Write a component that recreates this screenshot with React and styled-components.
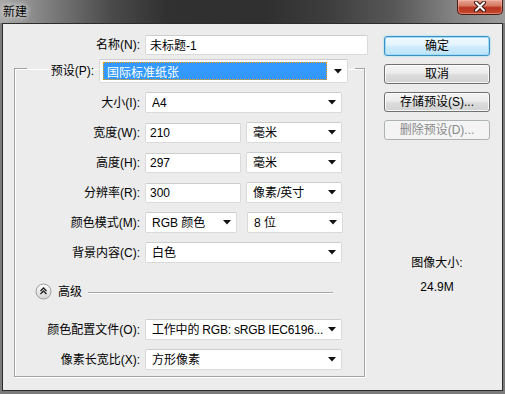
import styled, { createGlobalStyle } from "styled-components";

const GlobalStyle = createGlobalStyle`
  html, body {
    margin: 0;
    padding: 0;
    background: #7b7b7b;
  }
  body {
    font-family: "Liberation Sans", "Noto Sans CJK SC", sans-serif;
    font-size: 12px;
    color: #000;
  }
`;

const Window = styled.div`
  width: 505px;
  height: 394px;
  display: flex;
  flex-direction: column;
  background: #7b7b7b;
  overflow: hidden;
`;

const TitleBar = styled.div`
  height: 23px;
  flex: none;
  display: flex;
  justify-content: space-between;
  align-items: flex-start;
  background: linear-gradient(
    to right,
    #a9a9a9 0%,
    #808080 9%,
    #4a4a4a 22%,
    #313131 33%,
    #2f2f2f 52%,
    #3c3c3c 64%,
    #575757 78%,
    #848484 90%,
    #9b9b9b 100%
  );
`;

const Title = styled.div`
  padding: 3px 0 0 3px;
  line-height: 16px;
  font-family: "Noto Sans CJK SC", sans-serif;
  font-size: 12px;
  color: #000;
  text-shadow: 0 0 5px rgba(255, 255, 255, 0.9), 0 0 9px rgba(255, 255, 255, 0.6);
`;

const CloseButton = styled.div`
  width: 46px;
  height: 15px;
  margin-right: 2px;
  box-sizing: border-box;
  display: flex;
  justify-content: center;
  align-items: flex-start;
  padding-top: 1px;
  border: 1px solid #4e1a12;
  border-top: none;
  border-radius: 0 0 5px 5px;
  background: linear-gradient(#e7a493 0%, #d77a64 40%, #b8341f 55%, #c4492f 100%);
  box-shadow: inset 0 0 0 1px rgba(255, 200, 190, 0.45);
`;

const Frame = styled.div`
  flex: 1;
  display: flex;
  padding: 0 2px 3px 2px;
`;

const Client = styled.div`
  flex: 1;
  display: flex;
  border: 1px solid #2c2c2c;
  background: #ececec;
`;

const LeftColumn = styled.div`
  width: 381px;
  box-sizing: border-box;
  padding: 10px 0 0 11px;
  display: flex;
  flex-direction: column;
`;

const RightColumn = styled.div`
  width: 106px;
  padding-top: 12px;
  display: flex;
  flex-direction: column;
  gap: 8px;
`;

const Row = styled.div`
  display: flex;
  align-items: center;
  height: 21px;
  gap: 5px;
`;

const Label = styled.div`
  width: ${(p) => p.$width}px;
  flex: none;
  text-align: right;
  white-space: nowrap;
  line-height: 16px;
`;

const TextInput = styled.div`
  width: ${(p) => p.$width}px;
  height: 20px;
  box-sizing: border-box;
  flex: none;
  display: flex;
  align-items: center;
  padding-left: 4px;
  background: #fff;
  border: 1px solid #dadada;
  border-top-color: #cdcdcd;
  border-radius: 2px;
  white-space: nowrap;
`;

const SelectBox = styled.div`
  width: ${(p) => p.$width}px;
  height: ${(p) => p.$height || 21}px;
  box-sizing: border-box;
  flex: none;
  display: flex;
  align-items: center;
  margin-left: ${(p) => p.$offset || 0}px;
  padding-left: ${(p) => (p.$focused ? 3 : 6)}px;
  padding-right: 5px;
  gap: 3px;
  background: #fff;
  border: 1px solid #dadada;
  border-top-color: #cdcdcd;
  border-radius: 2px;
`;

const SelectText = styled.div`
  flex: 1;
  white-space: nowrap;
  overflow: hidden;
  line-height: 16px;
  letter-spacing: ${(p) => (p.$tight ? "-0.2px" : "normal")};
`;

const Highlight = styled.div`
  flex: 1;
  height: 18px;
  box-sizing: border-box;
  display: flex;
  align-items: center;
  margin-right: 4px;
  padding-left: 3px;
  background: #3399ff;
  color: #fff;
  border: 1px dotted #3a2a00;
  outline: 1px dotted #ff9a00;
  outline-offset: -1px;
  white-space: nowrap;
`;

const GroupBox = styled.fieldset`
  margin: -2px 0 0 0;
  width: 351px;
  box-sizing: border-box;
  padding: 9px 0 6px 12px;
  border: 1px solid #a2a2a2;
  box-shadow: inset 1px 1px 0 #fff, 1px 1px 0 #fff;
  min-width: 0;
`;

const Legend = styled.legend`
  padding: 6px 7px 0 0;
  margin: 0;
  display: flex;
  align-items: center;
  gap: 5px;
`;

const Rows = styled.div`
  display: flex;
  flex-direction: column;
  gap: 9px;
`;

const AdvancedRow = styled.div`
  height: 21px;
  margin: 18px 31px 17px 0;
  display: flex;
  align-items: center;
  padding-left: 8px;
`;

const AdvancedText = styled.span`
  margin-left: 6px;
  line-height: 16px;
`;

const Rule = styled.div`
  flex: 1;
  height: 1px;
  margin-left: 6px;
  margin-top: 1px;
  background: #a8a8a8;
  box-shadow: 0 1px 0 #fff;
`;

const Button = styled.div`
  height: 20px;
  box-sizing: border-box;
  display: flex;
  align-items: center;
  justify-content: center;
  border-radius: 3px;
  border: 1px solid ${(p) => (p.$primary ? "#3c8fc4" : p.$disabled ? "#adb2b5" : "#707070")};
  color: ${(p) => (p.$disabled ? "#8a8a8a" : "#000")};
  background: ${(p) =>
    p.$primary
      ? "linear-gradient(#f1f9fe 0%, #e3f4fd 45%, #cdebfb 55%, #bde3f8 100%)"
      : p.$disabled
      ? "#f4f4f4"
      : "linear-gradient(#f4f4f4 0%, #ececec 45%, #dcdcdc 55%, #d2d2d2 100%)"};
  box-shadow: ${(p) =>
    p.$primary
      ? "inset 0 0 0 1px #9fdcf7, 0 0 2px #7fd3f7"
      : p.$disabled
      ? "none"
      : "inset 0 0 0 1px rgba(255,255,255,0.8)"};
  white-space: nowrap;
  line-height: 16px;
`;

const SizeInfo = styled.div`
  margin-top: 107px;
  display: flex;
  flex-direction: column;
  align-items: center;
  gap: 8px;
  line-height: 16px;
`;

const Arrow = () => (
  <svg width="8" height="5" viewBox="0 0 8 5">
    <path d="M0 0 H8 L4 4.5 Z" fill="#111" />
  </svg>
);

const Select = ({ width, offset, tight, children }) => (
  <SelectBox $width={width} $offset={offset}>
    <SelectText $tight={tight}>{children}</SelectText>
    <Arrow />
  </SelectBox>
);

const CollapseIcon = () => (
  <svg width="17" height="17" viewBox="0 0 17 17">
    <defs>
      <linearGradient id="cg" x1="0" y1="0" x2="0" y2="1">
        <stop offset="0" stopColor="#ffffff" />
        <stop offset="1" stopColor="#d6d6d6" />
      </linearGradient>
    </defs>
    <circle cx="8.5" cy="8.5" r="7.5" fill="url(#cg)" stroke="#9a9a9a" />
    <path d="M5.5 8 L8.5 5 L11.5 8" fill="none" stroke="#222" strokeWidth="1.4" />
    <path d="M5.5 11 L8.5 8 L11.5 11" fill="none" stroke="#222" strokeWidth="1.4" />
  </svg>
);

const CloseGlyph = () => (
  <svg width="14" height="11" viewBox="0 0 14 11">
    <path d="M3 1.5 L11 9.5 M11 1.5 L3 9.5" stroke="#3a1a14" strokeWidth="4" strokeLinecap="round" />
    <path d="M3 1.5 L11 9.5 M11 1.5 L3 9.5" stroke="#fff" strokeWidth="2" strokeLinecap="round" />
  </svg>
);

export default function App() {
  return (
    <>
      <GlobalStyle />
      <Window>
        <TitleBar>
          <Title>新建</Title>
          <CloseButton>
            <CloseGlyph />
          </CloseButton>
        </TitleBar>
        <Frame>
          <Client>
            <LeftColumn>
              <Row>
                <Label $width={126}>名称(N):</Label>
                <TextInput $width={223}>未标题-1</TextInput>
              </Row>
              <GroupBox>
                <Legend>
                  <Label $width={67}>预设(P):</Label>
                  <SelectBox $width={249} $height={24} $focused>
                    <Highlight>国际标准纸张</Highlight>
                    <Arrow />
                  </SelectBox>
                </Legend>
                <Rows>
                  <Row>
                    <Label $width={113}>大小(I):</Label>
                    <Select width={197}>A4</Select>
                  </Row>
                  <Row>
                    <Label $width={113}>宽度(W):</Label>
                    <TextInput $width={96}>210</TextInput>
                    <Select width={96}>毫米</Select>
                  </Row>
                  <Row>
                    <Label $width={113}>高度(H):</Label>
                    <TextInput $width={96}>297</TextInput>
                    <Select width={96}>毫米</Select>
                  </Row>
                  <Row>
                    <Label $width={113}>分辨率(R):</Label>
                    <TextInput $width={96}>300</TextInput>
                    <Select width={96}>像素/英寸</Select>
                  </Row>
                  <Row>
                    <Label $width={113}>颜色模式(M):</Label>
                    <Select width={92}>RGB 颜色</Select>
                    <Select width={96} offset={5}>8 位</Select>
                  </Row>
                  <Row>
                    <Label $width={113}>背景内容(C):</Label>
                    <Select width={197}>白色</Select>
                  </Row>
                </Rows>
                <AdvancedRow>
                  <CollapseIcon />
                  <AdvancedText>高级</AdvancedText>
                  <Rule />
                </AdvancedRow>
                <Rows>
                  <Row>
                    <Label $width={113}>颜色配置文件(O):</Label>
                    <Select width={197} tight>工作中的 RGB: sRGB IEC6196...</Select>
                  </Row>
                  <Row>
                    <Label $width={113}>像素长宽比(X):</Label>
                    <Select width={197}>方形像素</Select>
                  </Row>
                </Rows>
              </GroupBox>
            </LeftColumn>
            <RightColumn>
              <Button $primary>确定</Button>
              <Button>取消</Button>
              <Button>存储预设(S)...</Button>
              <Button $disabled>删除预设(D)...</Button>
              <SizeInfo>
                <div>图像大小:</div>
                <div>24.9M</div>
              </SizeInfo>
            </RightColumn>
          </Client>
        </Frame>
      </Window>
    </>
  );
}
